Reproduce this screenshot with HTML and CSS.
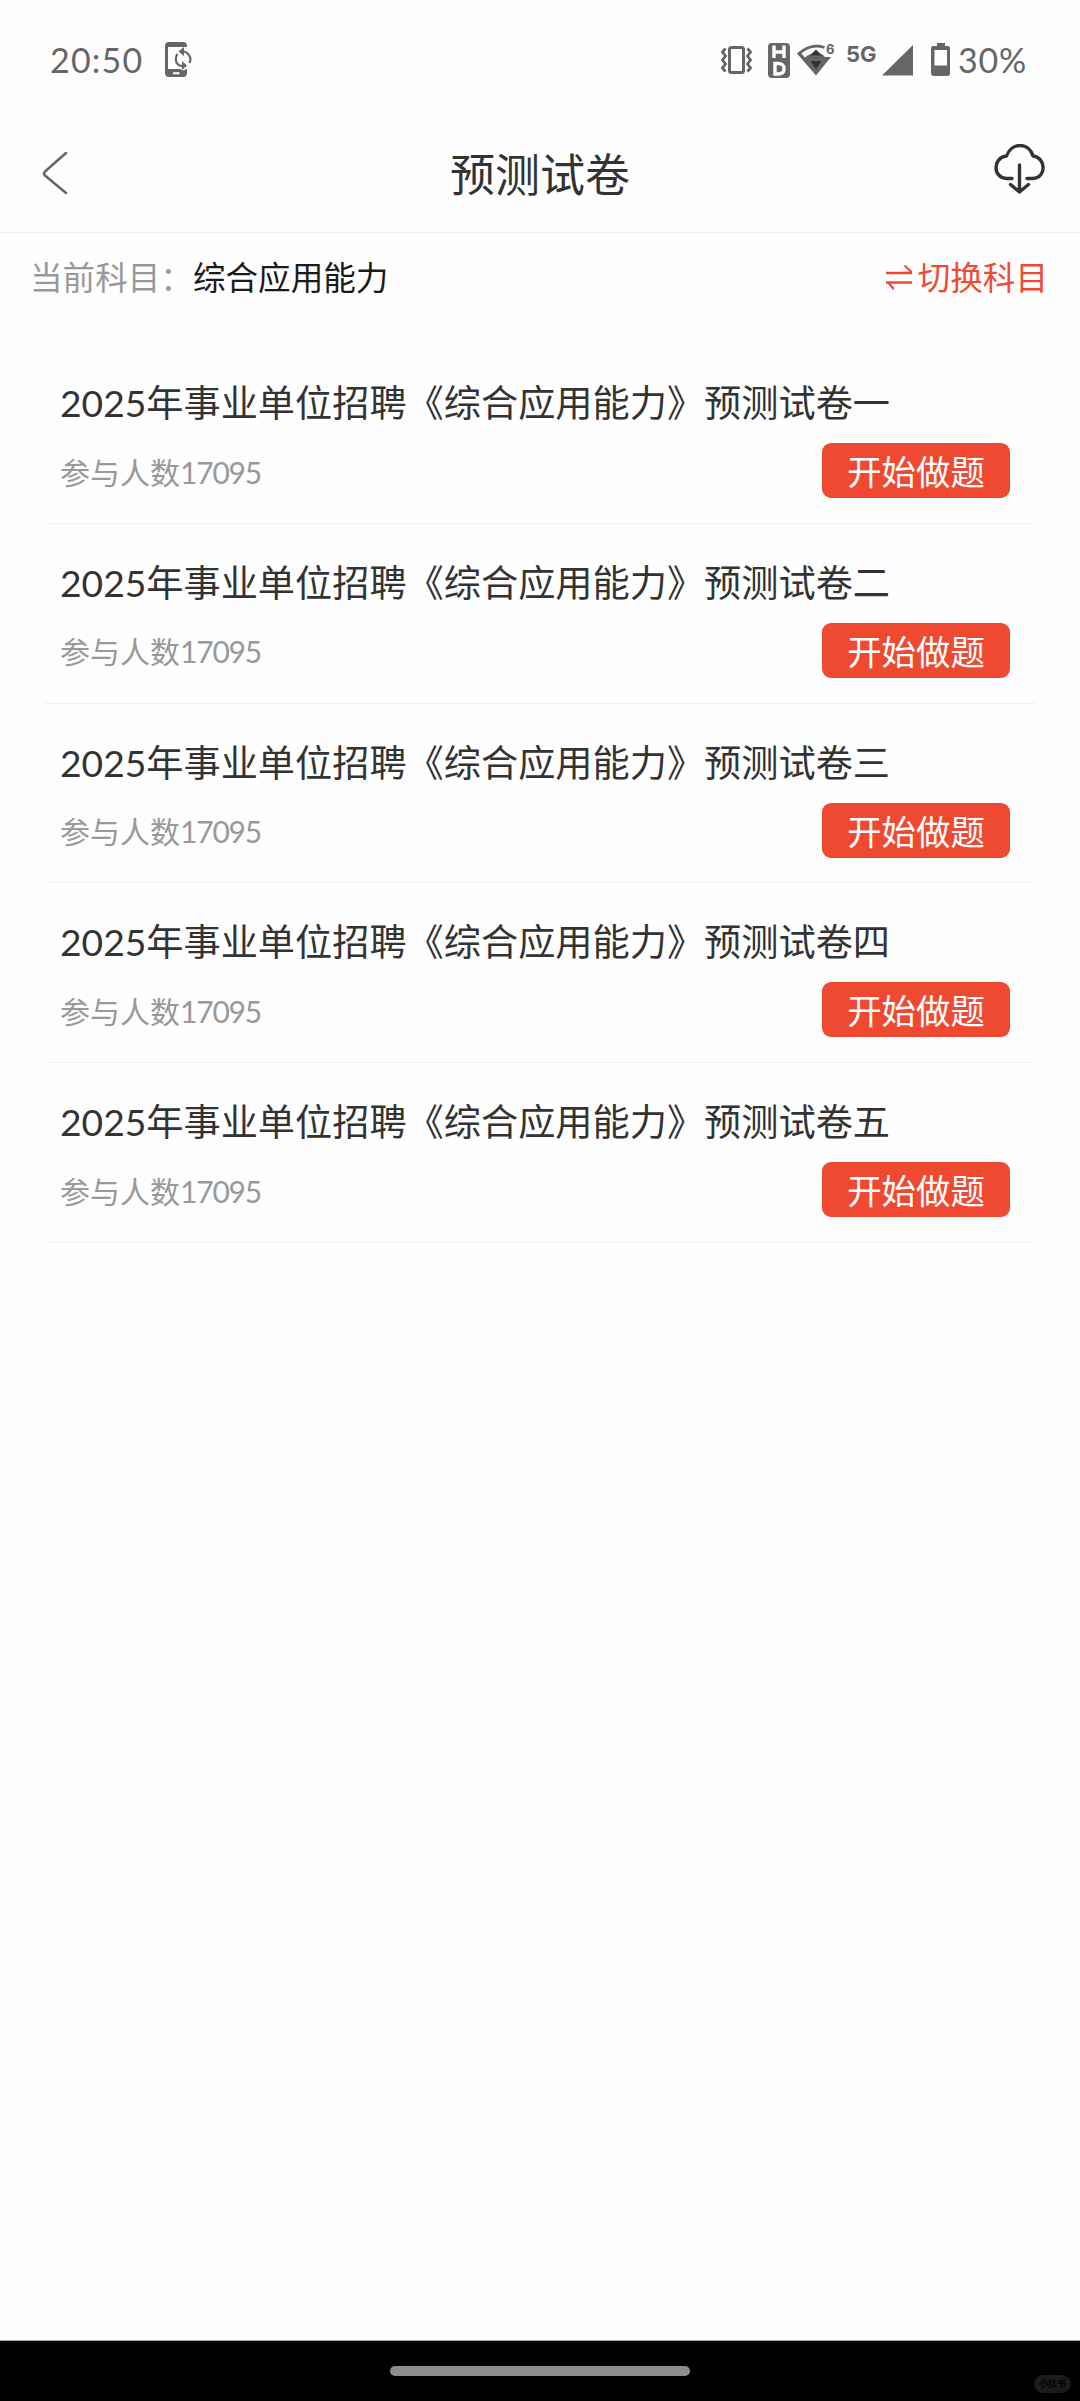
FILE: index.html
```html
<!DOCTYPE html>
<html lang="zh-CN">
<head>
<meta charset="utf-8">
<title>预测试卷</title>
<link rel="stylesheet" href="styles.css">
</head>
<body>
<div class="screen">
  <div class="status">
    <span class="clock">20:50</span>
    <svg class="cast" width="28" height="36" viewBox="0 0 28 36"><path fill="#666" fill-rule="evenodd" d="M4 0H18Q22 0 22 4V5H3V27H15L18 28.500 22 27V31Q22 35 18 35H4Q0 35 0 31V4Q0 0 4 0ZM8 30.300V32.300H14.500V30.300Z"/><path fill="none" stroke="#666" stroke-width="2.200" d="M13 22.500A8 8 0 0 1 12.500 12M17 9.500A8 8 0 0 1 24.500 21M12 21.500Q14 24.500 19 24"/><path fill="#666" d="M13.500 9.500 19 5V14ZM22 23.500 17 19V28Z"/></svg>
    <div class="indicators">
      <svg width="244" height="44" viewBox="715 36 244 44">
        <rect x="730.500" y="47.500" width="14" height="25" rx="2" fill="none" stroke="#666" stroke-width="3"/>
        <path fill="none" stroke="#666" stroke-width="2.800" d="M726.500 48.500l-3 3.500 3 4-3 4 3 4-3 4 3 3.500M748.500 48.500l3 3.500-3 4 3 4-3 4 3 4-3 3.500"/>
        <rect x="769" y="43" width="22" height="35" rx="4" fill="#666"/>
        <path fill="none" stroke="#fff" stroke-width="3.400" d="M775 45.500V58M785 45.500V58M775 52H785M776 63.500V74H779Q785 74 785 68.700T779 63.500Z"/>
        <path fill="none" stroke="#666" stroke-width="2.800" d="M800 53.500Q812 43 825.500 47.500"/>
        <path fill="#666" d="M798 53.500 800.500 51.500 806 57.500Q811 53 817 53T826 57H832L817 75.500Z"/>
        <path fill="#333" d="M811 55.500 817 49.500 823 55.500ZM811.500 61H822.500L817 69Z"/>
        <text class="six" x="827" y="54">6</text>
        <text class="net" x="847" y="61.500">5G</text>
        <path fill="#666" d="M883 75.500 914 45V75.500Z"/>
        <path fill="#666" fill-rule="evenodd" d="M938 43H946V46H949Q951 46 951 48V73Q951 76 948 76H935Q932 76 932 73V48Q932 46 934 46H938ZM935.500 50V65.500H948V50Z"/>
      </svg>
      <span class="battery">30%</span>
    </div>
  </div>
  <header class="header">
    <svg width="52" height="46" viewBox="0 0 52 46"><path fill="none" stroke="#666" stroke-width="2.500" stroke-linecap="round" stroke-linejoin="round" d="M24 3 3 21.500Q1 23.500 3 25.500L24 43"/></svg>
    <h1 class="title">预测试卷</h1>
    <svg width="52" height="50" viewBox="0 0 52 50"><path fill="none" stroke="#333" stroke-width="3.400" stroke-linecap="round" stroke-linejoin="round" d="M18 34.500H12.500C-1.500 34-1.500 13.500 12.500 12C17.500-2 35-2 39 12C52.500 13.500 52.500 34 39 34.500H33M25.500 21V48M16.500 40.500 25.500 48 34.500 40.500"/></svg>
  </header>
  <div class="subject">
    <span class="label">当前科目<span class="colon">：</span></span><span class="name">综合应用能力</span>
    <div class="switch">
      <svg width="28" height="26" viewBox="0 0 28 26"><path fill="none" stroke="#ef4a33" stroke-width="2.600" d="M1 8H27M27 17.500H1"/><path fill="#ef4a33" d="M27 9 18.500 1 20.500 0 27 6ZM1 16.500 8 25 9.500 23 5 18Z"/></svg>
      <span>切换科目</span>
    </div>
  </div>
  <ul class="papers">
    <li class="paper"><h2 class="name">2025年事业单位招聘《综合应用能力》预测试卷一</h2><div class="row"><span class="count">参与人数<span class="num">17095</span></span><button class="start">开始做题</button></div></li>
    <li class="paper"><h2 class="name">2025年事业单位招聘《综合应用能力》预测试卷二</h2><div class="row"><span class="count">参与人数<span class="num">17095</span></span><button class="start">开始做题</button></div></li>
    <li class="paper"><h2 class="name">2025年事业单位招聘《综合应用能力》预测试卷三</h2><div class="row"><span class="count">参与人数<span class="num">17095</span></span><button class="start">开始做题</button></div></li>
    <li class="paper"><h2 class="name">2025年事业单位招聘《综合应用能力》预测试卷四</h2><div class="row"><span class="count">参与人数<span class="num">17095</span></span><button class="start">开始做题</button></div></li>
    <li class="paper"><h2 class="name">2025年事业单位招聘《综合应用能力》预测试卷五</h2><div class="row"><span class="count">参与人数<span class="num">17095</span></span><button class="start">开始做题</button></div></li>
  </ul>
  <div class="navbar">
    <div class="handle"></div>
    <span class="mark">小红书</span>
  </div>
</div>
</body>
</html>
```
FILE: styles.css
```css
* { box-sizing: border-box; margin: 0; padding: 0; }
body { background: #fefefe; font-family: Lato, "Noto Sans CJK SC", sans-serif; color: #333; }
h1, h2 { font-weight: 400; }
svg { display: block; flex: none; }
.screen { width: 1080px; height: 2401px; display: flex; flex-direction: column; white-space: nowrap; }

.status { height: 120px; display: flex; align-items: flex-start; padding: 36px 51px 0 50px; color: #666; }
.clock { width: 115px; font-size: 34px; line-height: 48px; letter-spacing: 1.200px; }
.cast { margin-top: 6px; }
.indicators { margin-left: auto; display: flex; }
.battery { width: 71px; font-size: 34px; line-height: 48px; letter-spacing: .8px; }
.six { font: 700 13px Inter, sans-serif; fill: #666; }
.net { font: 700 22px Inter, sans-serif; fill: #666; }

.header { height: 113px; border-bottom: 1px solid #ececec; display: flex; justify-content: space-between; padding: 24px 34px 0 42px; }
.header svg:first-child { margin-top: 6px; }
.title { font-size: 45px; line-height: 62px; margin-right: 8px; }

.subject { height: 111px; display: flex; align-items: flex-start; padding: 21px 32px 0 30px; font-size: 32.600px; line-height: 48px; }
.label { color: #999; }
.subject .name { color: #1a1a1a; }
.switch { margin-left: auto; display: flex; align-items: center; gap: 5px; color: #ef4a33; }

.papers { list-style: none; padding: 0 44px; }
.paper { height: 179.800px; border-bottom: 1px solid #f2f2f2; padding: 32px 26px 0 16px; }
.paper .name { font-size: 37.200px; line-height: 54px; height: 67px; }
.row { display: flex; justify-content: space-between; align-items: center; height: 55px; }
.count { color: #999; font-size: 30px; }
.num { letter-spacing: -1.200px; }
.start { width: 188px; height: 55px; border: 0; border-radius: 9px; background: #f04931; color: #fff; font: 34.400px/55px "Noto Sans CJK SC", sans-serif; }

.navbar { margin-top: auto; height: 61px; border-top: 1px solid #aaa; background: #000; position: relative; display: flex; justify-content: center; padding-top: 25px; }
.handle { width: 300px; height: 10px; border-radius: 5px; background: #8c8c8c; }
.mark { position: absolute; right: 9px; bottom: 8px; width: 37px; height: 18px; border-radius: 9px; background: #1b1b1b; color: #000; font: 700 9px/17px "Noto Sans CJK SC", sans-serif; text-align: center; }
```
